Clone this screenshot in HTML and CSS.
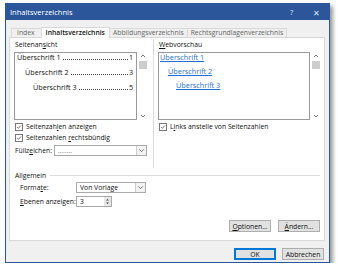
FILE: index.html
```html
<!DOCTYPE html>
<html lang="de">
<head>
<meta charset="utf-8">
<link rel="stylesheet" href="styles.css">
</head>
<body>
<div class="window">
  <div class="titlebar">
    <span class="title">Inhaltsverzeichnis</span>
    <span class="tb-btn">?</span>
    <span class="tb-btn close">✕</span>
  </div>
  <div class="tabs">
    <div class="tab first">Index</div>
    <div class="tab active">Inhaltsverzeichnis</div>
    <div class="tab">Abbildungsverzeichnis</div>
    <div class="tab">Rechtsgrundlagenverzeichnis</div>
  </div>
  <div class="panel">
    <div class="top">
      <div class="col left">
        <div class="label">Seitenan<u>s</u>icht</div>
        <div class="listbox">
          <div class="list">
            <div class="row l1"><span>Überschrift 1</span><span class="dots"></span><span>1</span></div>
            <div class="row l2"><span>Überschrift 2</span><span class="dots"></span><span>3</span></div>
            <div class="row l3"><span>Überschrift 3</span><span class="dots"></span><span>5</span></div>
          </div>
          <div class="scroll">
            <svg class="arr" viewBox="0 0 8 8"><path d="M2 5 L4 3 L6 5" fill="none" stroke="#555" stroke-width="0.8"/></svg>
            <span class="thumb"></span>
            <svg class="arr down" viewBox="0 0 8 8"><path d="M2 3 L4 5 L6 3" fill="none" stroke="#555" stroke-width="0.8"/></svg>
          </div>
        </div>
        <div class="check"><span class="box"><svg viewBox="0 0 8 8"><path d="M1.5 4.2 L3.2 5.8 L6.6 2" fill="none" stroke="#333" stroke-width="0.9"/></svg></span><span>Seitenzah<u>l</u>en anzeigen</span></div>
        <div class="check"><span class="box"><svg viewBox="0 0 8 8"><path d="M1.5 4.2 L3.2 5.8 L6.6 2" fill="none" stroke="#333" stroke-width="0.9"/></svg></span><span>Seitenzahlen <u>r</u>echtsbündig</span></div>
        <div class="field">
          <span class="flabel">Füllz<u>e</u>ichen:</span>
          <div class="select fill"><span class="val">........</span><span class="drop"><svg viewBox="0 0 8 8"><path d="M2 3 L4 5 L6 3" fill="none" stroke="#666" stroke-width="0.8"/></svg></span></div>
        </div>
      </div>
      <div class="col right">
        <div class="label"><u>W</u>ebvorschau</div>
        <div class="listbox">
          <div class="list links">
            <div class="lrow l1"><a>Überschrift 1</a></div>
            <div class="lrow l2"><a>Überschrift 2</a></div>
            <div class="lrow l3"><a>Überschrift 3</a></div>
          </div>
          <div class="scroll">
            <svg class="arr" viewBox="0 0 8 8"><path d="M2 5 L4 3 L6 5" fill="none" stroke="#555" stroke-width="0.8"/></svg>
            <span class="thumb"></span>
            <svg class="arr down" viewBox="0 0 8 8"><path d="M2 3 L4 5 L6 3" fill="none" stroke="#555" stroke-width="0.8"/></svg>
          </div>
        </div>
        <div class="check"><span class="box"><svg viewBox="0 0 8 8"><path d="M1.5 4.2 L3.2 5.8 L6.6 2" fill="none" stroke="#333" stroke-width="0.9"/></svg></span><span>L<u>i</u>nks anstelle von Seitenzahlen</span></div>
      </div>
    </div>
    <div class="general">
      <div class="ghead"><span>Allgemein</span><span class="line"></span></div>
      <div class="grow">
        <span class="glabel">Forma<u>t</u>e:</span>
        <div class="select fmt"><span class="val">Von Vorlage</span><span class="drop"><svg viewBox="0 0 8 8"><path d="M2 3 L4 5 L6 3" fill="none" stroke="#666" stroke-width="0.8"/></svg></span></div>
      </div>
      <div class="grow">
        <span class="glabel"><u>E</u>benen anzeigen:</span>
        <div class="spin"><span class="val">3</span><span class="spinbtns"><svg viewBox="0 0 6 10"><path d="M1.5 4 L3 2.3 L4.5 4 Z M1.5 6 L3 7.7 L4.5 6 Z" fill="#333"/></svg></span></div>
      </div>
    </div>
    <div class="pbtns">
      <div class="btn"><span><u>O</u>ptionen...</span></div>
      <div class="btn"><span><u>Ä</u>ndern...</span></div>
    </div>
  </div>
  <div class="footer">
    <div class="btn ok">OK</div>
    <div class="btn">Abbrechen</div>
  </div>
</div>
</body>
</html>
```
FILE: styles.css
```css
html, body {
  margin: 0;
  padding: 0;
  background: #ffffff;
}
body {
  font-family: "Open Sans", "Noto Sans", sans-serif;
  font-size: 6.8px;
  color: #111;
}
u { text-decoration: underline; text-underline-offset: 1px; }
.window {
  box-sizing: border-box;
  margin: 3px 0 0 5px;
  width: 325px;
  height: 260px;
  border: 1px solid #2b579a;
  background: #f0f0f0;
  box-shadow: 3px 3px 4px rgba(0,0,0,0.4);
  display: flex;
  flex-direction: column;
}
.titlebar {
  height: 16px;
  background: #2b579a;
  color: #fff;
  display: flex;
  align-items: center;
  padding-left: 4px;
  flex: none;
}
.title { flex: 1; font-size: 7.5px; }
.tb-btn {
  width: 25px;
  text-align: center;
  font-size: 7.5px;
  color: #dfe7f3;
}
.tb-btn.close { font-size: 8px; }
.tabs {
  height: 17px;
  display: flex;
  align-items: flex-end;
  padding-left: 6px;
  flex: none;
  white-space: nowrap;
}
.tab {
  height: 8px;
  line-height: 8px;
  padding: 0 3px;
  border: 1px solid #d9d9d9;
  border-bottom: none;
  margin-left: -1px;
  color: #666;
  background: #f0f0f0;
}
.tab.first { padding: 0 6px 0 5px; }
.tab.active {
  height: 10px;
  line-height: 10px;
  background: #fff;
  color: #111;
  font-weight: 600;
  position: relative;
  top: 1px;
  z-index: 1;
  padding: 0 4px 0 4px;
}
.panel {
  box-sizing: border-box;
  margin: 0 4px 0 3px;
  height: 204px;
  background: #fff;
  border: 1px solid #d9d9d9;
  padding: 1px 4px 0 4px;
  display: flex;
  flex-direction: column;
  flex: none;
}
.top {
  display: grid;
  grid-template-columns: 133px minmax(0, 1fr);
  column-gap: 6px;
  height: 131px;
}
.col { min-width: 0; }
.col.right {
  border-left: 1px solid #dcdcdc;
  padding-left: 4px;
  height: 129px;
}
.label {
  height: 13px;
  line-height: 12px;
  padding-left: 1px;
}
.listbox {
  box-sizing: border-box;
  height: 68px;
  display: flex;
}
.list {
  flex: 1;
  min-width: 0;
  overflow: hidden;
  border: 1px solid #9a9a9a;
  padding-right: 3px;
}
.row {
  display: flex;
  height: 9px;
  line-height: 9px;
  margin-bottom: 6px;
  font-size: 7.2px;
  white-space: nowrap;
}
.row .dots {
  flex: 1;
  min-width: 0;
  height: 7px;
  margin: 0 1px 0 2px;
  background: linear-gradient(to right, #444 1px, transparent 1px) repeat-x left bottom / 2px 1px;
}
.row.l1 { padding-left: 2px; }
.row.l2 { padding-left: 10px; }
.row.l3 { padding-left: 18px; }
.lrow {
  height: 9px;
  line-height: 9px;
  margin-bottom: 5px;
  font-size: 7.3px;
  white-space: nowrap;
}
.lrow a { color: #1f6fd0; text-decoration: underline; }
.lrow.l1 { padding-left: 1px; }
.lrow.l2 { padding-left: 9px; }
.lrow.l3 { padding-left: 17px; }
.scroll {
  width: 9px;
  flex: none;
  display: flex;
  flex-direction: column;
  align-items: center;
  margin-left: 1px;
}
.arr {
  width: 8px;
  height: 8px;
}
.arr.down { margin-top: auto; }
.thumb {
  width: 8px;
  height: 8px;
  background: #cdcdcd;
  margin-top: 1px;
}
.check {
  display: flex;
  align-items: center;
  height: 11px;
  white-space: nowrap;
}
.box {
  box-sizing: border-box;
  width: 8px;
  height: 8px;
  border: 1px solid #777;
  margin: 0 3px 0 1px;
  display: flex;
  background: #fff;
  flex: none;
}
.box svg { width: 100%; height: 100%; }
.listbox + .check { margin-top: 1px; }
.field {
  display: flex;
  align-items: center;
  margin-top: 2px;
  height: 11px;
}
.flabel { width: 39px; padding-left: 1px; white-space: nowrap; }
.select {
  box-sizing: border-box;
  height: 11px;
  border: 1px solid #aaa;
  display: flex;
  align-items: center;
  background: #fff;
}
.select .val { flex: 1; padding-left: 3px; }
.select .drop {
  width: 9px;
  height: 9px;
  border-left: 1px solid #ccc;
  background: #f2f2f2;
  display: flex;
}
.select .drop svg { width: 100%; height: 100%; }
.select.fill { width: 94px; color: #777; }
.select.fmt { width: 70px; }
.ghead {
  display: flex;
  align-items: center;
  height: 10px;
  padding-left: 1px;
}
.ghead .line {
  flex: 1;
  height: 1px;
  background: #dcdcdc;
  margin-left: 4px;
}
.grow {
  display: flex;
  align-items: center;
  height: 14px;
}
.grow:first-of-type { margin-top: 3px; }
.glabel {
  width: 62px;
  padding-left: 6px;
  box-sizing: border-box;
  white-space: nowrap;
}
.spin {
  box-sizing: border-box;
  width: 36px;
  height: 11px;
  border: 1px solid #aaa;
  display: flex;
  align-items: center;
  background: #fff;
}
.spin .val { flex: 1; padding-left: 3px; }
.spinbtns {
  width: 7px;
  height: 9px;
  background: #e6e6e6;
  display: flex;
}
.spinbtns svg { width: 100%; height: 100%; }
.pbtns {
  display: flex;
  justify-content: flex-end;
  gap: 7px;
  margin-top: 12px;
  padding-right: 0;
}
.btn {
  box-sizing: border-box;
  width: 42px;
  height: 12px;
  border: 1px solid #adadad;
  background: #e1e1e1;
  display: flex;
  align-items: center;
  justify-content: center;
  white-space: nowrap;
}
.footer {
  display: flex;
  justify-content: flex-end;
  gap: 6px;
  padding: 7px 5px 0 0;
}
.btn.ok { border: 1px solid #0078d7; box-shadow: inset 0 0 0 1px #0078d7; }
```
